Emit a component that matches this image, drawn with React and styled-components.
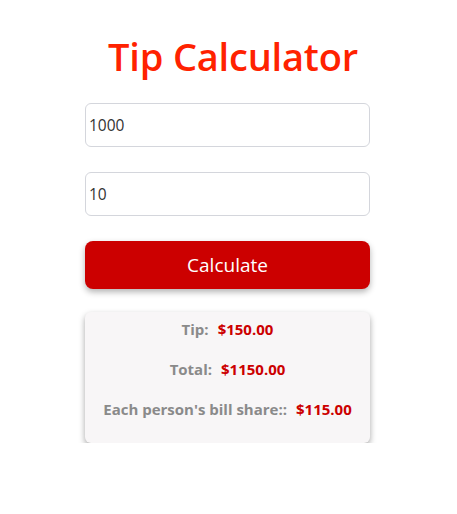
import React, { useState } from 'react';
import styled, { createGlobalStyle } from 'styled-components';

const GlobalStyle = createGlobalStyle`
  body {
    margin: 0;
    background: #fff;
    font-family: "Open Sans", "Noto Sans", sans-serif;
  }
`

const Page = styled.div`
  display: flex;
  flex-direction: column;
  align-items: center;
  padding-top: 28px;
`
const Title = styled.h1`
  margin: 0 0 19px 9px;
  color: #ff2200;
  font-size: 38px;
  font-weight: 600;
  letter-spacing: -0.2px;
  line-height: 56px;
`
const Form = styled.div`
  width: 285px;
  margin-right: 2px;
  display: flex;
  flex-direction: column;
  gap: 25px;
`
const Input = styled.input`
  box-sizing: border-box;
  width: 100%;
  height: 44px;
  padding: 0 3px;
  border: 1px solid #d4d6dc;
  border-radius: 6px;
  font-family: inherit;
  font-size: 15.5px;
  color: #333;
  outline: none;
`
const Button = styled.button`
  height: 48px;
  border: none;
  border-radius: 8px;
  background: #cc0000;
  color: #fff;
  font-family: inherit;
  font-size: 19px;
  box-shadow: 0 3px 6px rgba(0, 0, 0, 0.3);
  cursor: pointer;
`
const Results = styled.div`
  margin-top: -2px;
  padding: 7px 0 23px;
  background: #f8f6f7;
  border-radius: 6px;
  box-shadow: 0 3px 6px rgba(0, 0, 0, 0.35);
  display: flex;
  flex-direction: column;
  gap: 19px;
`
const Row = styled.div`
  text-align: center;
  font-size: 15px;
  font-weight: 700;
  line-height: 21px;
  color: #8a8a8a;
`
const Value = styled.span`
  color: #cc0000;
  margin-left: 9px;
`

const App = () => {
  const [bill, setBill] = useState('1000');
  const [tip, setTip] = useState('10');
  const [people] = useState(10);
  const tipAmt = (parseFloat(bill) || 0) * 0.15;
  const total = (parseFloat(bill) || 0) + tipAmt;

  return (
    <Page>
      <GlobalStyle />
      <Title>Tip Calculator</Title>
      <Form>
        <Input value={bill} onChange={e => setBill(e.target.value)} />
        <Input value={tip} onChange={e => setTip(e.target.value)} />
        <Button>Calculate</Button>
        <Results>
          <Row>Tip:<Value>${tipAmt.toFixed(2)}</Value></Row>
          <Row>Total:<Value>${total.toFixed(2)}</Value></Row>
          <Row>Each person's bill share::<Value>${(total / people).toFixed(2)}</Value></Row>
        </Results>
      </Form>
    </Page>
  );
};

export default App;
